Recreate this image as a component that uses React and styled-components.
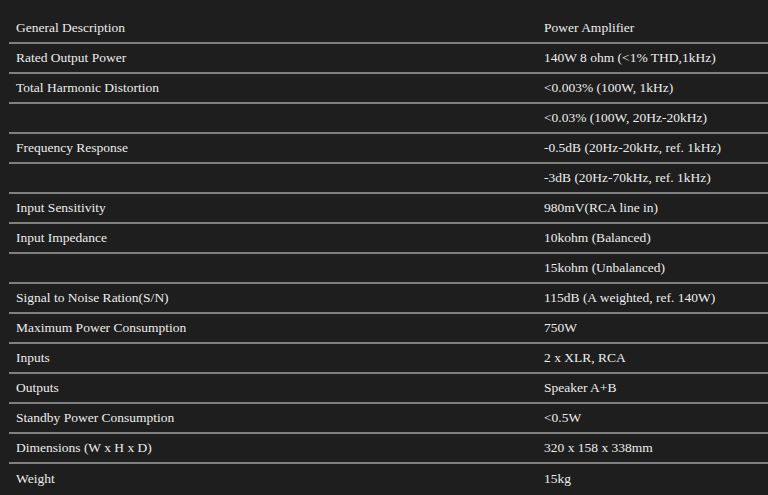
import styled, { createGlobalStyle } from 'styled-components'

const GlobalStyle = createGlobalStyle`
  html, body {
    margin: 0;
    background: #1e1e1e;
  }
`

const Specs = styled.div`
  padding: 14px 0 0 9px;
  font-family: "Liberation Serif", "Times New Roman", serif;
  font-size: 13.5px;
  color: #ececec;
`

const Row = styled.div`
  display: grid;
  grid-template-columns: 528px 1fr;
  height: 30px;
  box-sizing: border-box;
  border-bottom: ${p => (p.last ? 'none' : '2px solid #808080')};
`

const Cell = styled.div`
  display: flex;
  align-items: center;
  padding: 0 0 0 7px;
  white-space: nowrap;
`

const specs = [
  ['General Description', 'Power Amplifier'],
  ['Rated Output Power', '140W 8 ohm (<1% THD,1kHz)'],
  ['Total Harmonic Distortion', '<0.003% (100W, 1kHz)'],
  ['', '<0.03% (100W, 20Hz-20kHz)'],
  ['Frequency Response', '-0.5dB (20Hz-20kHz, ref. 1kHz)'],
  ['', '-3dB (20Hz-70kHz, ref. 1kHz)'],
  ['Input Sensitivity', '980mV(RCA line in)'],
  ['Input Impedance', '10kohm (Balanced)'],
  ['', '15kohm (Unbalanced)'],
  ['Signal to Noise Ration(S/N)', '115dB (A weighted, ref. 140W)'],
  ['Maximum Power Consumption', '750W'],
  ['Inputs', '2 x XLR, RCA'],
  ['Outputs', 'Speaker A+B'],
  ['Standby Power Consumption', '<0.5W'],
  ['Dimensions (W x H x D)', '320 x 158 x 338mm'],
  ['Weight', '15kg'],
]

function App() {
  return (
    <>
      <GlobalStyle />
      <Specs>
        {specs.map(([name, value], i) => (
          <Row key={i} last={i === specs.length - 1}>
            <Cell>{name}</Cell>
            <Cell>{value}</Cell>
          </Row>
        ))}
      </Specs>
    </>
  )
}

export default App
